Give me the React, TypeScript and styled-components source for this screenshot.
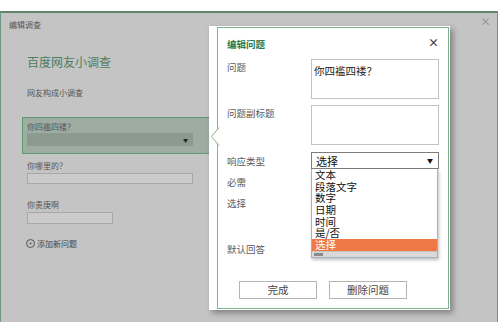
import React from "react";
import styled, {createGlobalStyle} from "styled-components";

const GlobalStyle = createGlobalStyle`
  html, body {
    margin: 0;
    padding: 0;
    background: #ffffff;
  }
  body {
    width: 502px;
    height: 322px;
    overflow: hidden;
    font-family: "Noto Sans CJK SC", "Noto Sans", sans-serif;
  }
`;

const Frame = styled.div`
  position: relative;
  display: flex;
  margin-top: 11px;
  width: 496px;
  height: 309px;
  background: #c4c4c4;
  border-top: 2px solid #5f8570;
  border-left: 1px solid #6f9880;
  border-right: 1px solid #6f9880;
`;

const PageClose = styled.div`
  position: absolute;
  top: 1px;
  right: 6px;
  font-size: 11px;
  line-height: 14px;
  color: #8a8a8a;
`;

const LeftCol = styled.div`
  width: 208px;
  flex-shrink: 0;
  display: flex;
  flex-direction: column;
  padding-top: 6px;
`;

const Header = styled.div`
  padding-left: 8px;
  font-size: 8px;
  line-height: 11px;
  color: #555;
`;

const Body = styled.div`
  display: flex;
  flex-direction: column;
  padding-left: 26px;
`;

const SurveyTitle = styled.div`
  margin-top: 24px;
  font-size: 12px;
  line-height: 16px;
  color: #4f7d5f;
`;

const SmallText = styled.div<{ $top: number }>`
  margin-top: ${p => p.$top}px;
  font-size: 8px;
  line-height: 11px;
  color: #555;
`;

const Highlight = styled.div`
  margin-top: 19.5px;
  margin-left: -5px;
  width: 187px;
  height: 37px;
  padding: 2.5px 0 0 4px;
  box-sizing: border-box;
  background: #9dada1;
  border: 1px solid #5e9a72;
  border-right: none;
  display: flex;
  flex-direction: column;
`;

const FakeSelect = styled.div`
  margin-top: 1.5px;
  width: 166px;
  height: 13px;
  background: #8b9b8f;
  display: flex;
  align-items: center;
  justify-content: flex-end;
  padding-right: 5px;
  box-sizing: border-box;
  font-size: 5px;
  color: #222;
`;

const FakeInput = styled.div<{ $w: number; $h: number }>`
  margin-top: 2.5px;
  width: ${p => p.$w}px;
  height: ${p => p.$h}px;
  box-sizing: border-box;
  background: #cbcbcb;
  border: 1px solid #a8a8a8;
`;

const AddRow = styled.div`
  margin-top: 14px;
  margin-left: -1px;
  display: flex;
  align-items: center;
  gap: 2px;
  font-size: 8px;
  line-height: 11px;
  color: #444;
`;

const Plus = styled.span`
  width: 7px;
  height: 7px;
  border: 1px solid #555;
  border-radius: 50%;
  display: flex;
  align-items: center;
  justify-content: center;
  font-size: 7px;
  line-height: 7px;
  color: #555;
`;

const ModalOuter = styled.div`
  position: relative;
  margin-top: 13px;
  width: 241px;
  height: 284px;
  box-sizing: border-box;
  padding: 1px 1px 1px 8px;
  background: #ffffff;
  box-shadow: 3px 3px 6px rgba(0, 0, 0, 0.35);
`;

const Pointer = styled.svg`
  position: absolute;
  left: 1px;
  top: 101px;
`;

const ModalInner = styled.div`
  position: relative;
  height: 100%;
  box-sizing: border-box;
  border: 1px solid #7fb191;
  padding: 9px 9px 0 9px;
  display: flex;
  flex-direction: column;
`;

const TitleRow = styled.div`
  display: flex;
  justify-content: space-between;
  align-items: center;
  height: 14px;
`;

const ModalTitle = styled.div`
  font-size: 9.5px;
  font-weight: bold;
  color: #2e7a45;
`;

const Close = styled.div`
  margin-top: -4px;
  font-size: 11px;
  font-weight: bold;
  color: #444;
`;

const FormRow = styled.div<{ $top: number; $center?: boolean }>`
  position: relative;
  margin-top: ${p => p.$top}px;
  display: grid;
  grid-template-columns: 84px 128px;
  align-items: ${p => (p.$center ? "center" : "start")};
`;

const Label = styled.div<{ $pad?: number }>`
  padding-top: ${p => p.$pad ?? 0}px;
  font-size: 9.5px;
  line-height: 14px;
  color: #5a5a5a;
`;

const TextArea = styled.div`
  height: 40px;
  box-sizing: border-box;
  border: 1px solid #c2c2c2;
  padding: 4px 2px;
  font-size: 10.5px;
  line-height: 13px;
  color: #222;
`;

const Select = styled.div`
  height: 17px;
  box-sizing: border-box;
  border: 1px solid #7c7c7c;
  display: flex;
  align-items: center;
  justify-content: space-between;
  padding: 0 5px 0 4px;
  font-size: 11px;
  color: #111;
`;

const Caret = styled.span`
  font-size: 6px;
  color: #111;
`;

const Dropdown = styled.div`
  position: absolute;
  left: 84px;
  top: 17px;
  width: 127px;
  box-sizing: border-box;
  background: #ffffff;
  border: 1px solid #9fb2c6;
  border-top: none;
  box-shadow: 1px 2px 3px rgba(0, 0, 0, 0.25);
  z-index: 2;
`;

const Option = styled.div<{ $active?: boolean }>`
  height: 11.7px;
  line-height: 11.7px;
  padding-left: 3px;
  font-size: 10.5px;
  color: ${p => (p.$active ? "#ffffff" : "#111")};
  background: ${p => (p.$active ? "#f07844" : "transparent")};
`;

const ScrollStrip = styled.div`
  height: 5px;
  background: #d9d9d9;
  border-top: 1px solid #c4c4c4;
  display: flex;
  align-items: center;
  padding-left: 2px;
`;

const Thumb = styled.div`
  width: 9px;
  height: 3px;
  background: #8a8a8a;
`;

const ButtonRow = styled.div`
  margin-top: 24.7px;
  margin-left: 12px;
  display: flex;
  gap: 12px;
`;

const Btn = styled.div`
  width: 78px;
  height: 18px;
  box-sizing: border-box;
  border: 1px solid #b4b4b4;
  display: flex;
  align-items: center;
  justify-content: center;
  font-size: 10.5px;
  color: #444;
`;

const options = ["文本", "段落文字", "数字", "日期", "时间", "是/否", "选择"];

export default function App() {
  return (
    <>
      <GlobalStyle/>
      <Frame>
        <PageClose>×</PageClose>
        <LeftCol>
          <Header>编辑调查</Header>
          <Body>
            <SurveyTitle>百度网友小调查</SurveyTitle>
            <SmallText $top={16.5}>网友构成小调查</SmallText>
            <Highlight>
              <SmallText $top={0}>你四褴四褛？</SmallText>
              <FakeSelect>▼</FakeSelect>
            </Highlight>
            <SmallText $top={5.5}>你哪里的？</SmallText>
            <FakeInput $w={166} $h={11}/>
            <SmallText $top={14.5}>你贵庚啊</SmallText>
            <FakeInput $w={86} $h={12}/>
            <AddRow>
              <Plus>+</Plus>
              添加新问题
            </AddRow>
          </Body>
        </LeftCol>

        <ModalOuter>
          <ModalInner>
            <TitleRow>
              <ModalTitle>编辑问题</ModalTitle>
              <Close>×</Close>
            </TitleRow>

            <FormRow $top={8}>
              <Label $pad={1}>问题</Label>
              <TextArea>你四褴四褛？</TextArea>
            </FormRow>

            <FormRow $top={6}>
              <Label $pad={1}>问题副标题</Label>
              <TextArea/>
            </FormRow>

            <FormRow $top={7} $center>
              <Label>响应类型</Label>
              <Select>
                选择
                <Caret>▼</Caret>
              </Select>
              <Dropdown>
                {options.map((o, i) => (
                  <Option key={o} $active={i === options.length - 1}>{o}</Option>
                ))}
                <ScrollStrip><Thumb/></ScrollStrip>
              </Dropdown>
            </FormRow>

            <FormRow $top={5.7}>
              <Label>必需</Label>
            </FormRow>
            <FormRow $top={7.6}>
              <Label>选择</Label>
            </FormRow>
            <FormRow $top={32}>
              <Label>默认回答</Label>
            </FormRow>

            <ButtonRow>
              <Btn>完成</Btn>
              <Btn>删除问题</Btn>
            </ButtonRow>
          </ModalInner>
          <Pointer width="10" height="20" viewBox="0 0 10 20">
            <polygon points="9,0 1,9.5 9,19" fill="#ffffff"/>
            <polyline points="9,0.5 1.5,9.5 9,18.5" fill="none" stroke="#7fb191" strokeWidth="1"/>
          </Pointer>
        </ModalOuter>
      </Frame>
    </>
  );
}
